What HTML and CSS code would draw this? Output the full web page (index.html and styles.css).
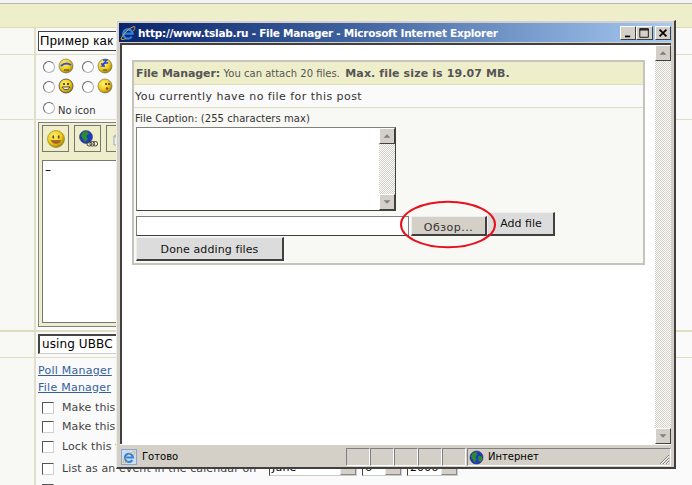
FILE: index.html
```html
<!DOCTYPE html>
<html lang="ru">
<head>
<meta charset="utf-8">
<title>File Manager</title>
<link rel="stylesheet" href="styles.css">
</head>
<body>
<svg class="defs" width="0" height="0">
  <defs>
    <radialGradient id="sm" cx="40%" cy="35%" r="70%"><stop offset="0" stop-color="#fff27a"/><stop offset=".6" stop-color="#f2c90e"/><stop offset="1" stop-color="#8a7410"/></radialGradient>
    <symbol id="ie" viewBox="0 0 16 16">
      <path d="M3.400 8.600h9.200A4.700 4.700 0 1 0 11.800 11.600" fill="none" stroke="#2f7fe0" stroke-width="2.300"/>
      <path d="M1 14C2.500 9.500 9 3 14 1.500c1.800-.2.500 3-.6 4.500M1 14c1 1.200 3.500.4 5-.6" fill="none" stroke="#e8b030" stroke-width=".9"/>
    </symbol>
    <symbol id="globe" viewBox="0 0 16 16">
      <circle cx="8" cy="8" r="7" fill="#1a3cc0" stroke="#333" stroke-width=".6"/>
      <path d="M4 3l4-1 1 3-2 2 1 3-2 3-2-3-2-3zM10 6l4 1 0 3-2 3-2-2z" fill="#2c8a30"/>
    </symbol>
  </defs>
</svg>

<div class="page">
  <div class="top-strip"></div>
  <div class="top-band"></div>

  <div class="row row-subject">
    <div class="side"></div>
    <div class="main"><div class="field field-subject">Пример как с</div></div>
  </div>

  <div class="row row-icons">
    <div class="side"></div>
    <div class="main icons">
      <div class="icon-grid">
        <span class="radio"></span><svg class="smiley" viewBox="0 0 16 16"><circle cx="8" cy="8" r="7" fill="url(#sm)" stroke="#666" stroke-width=".6"/><path d="M3 8c3-3 7-3 10-1" stroke="#3355dd" stroke-width="2" fill="none"/><path d="M6 12h5" stroke="#333"/></svg>
        <span class="radio"></span><svg class="smiley" viewBox="0 0 16 16"><circle cx="8" cy="8" r="7" fill="url(#sm)" stroke="#666" stroke-width=".6"/><path d="M6 2h4l-3 3h4M4 6h3l-2 2h3" stroke="#2244ee" stroke-width="1.300" fill="none"/><path d="M6 12h4" stroke="#333"/></svg>
        <span class="radio"></span><svg class="smiley" viewBox="0 0 16 16"><circle cx="8" cy="8" r="7" fill="url(#sm)" stroke="#444" stroke-width=".8"/><circle cx="6" cy="6" r="1" fill="#222"/><circle cx="10" cy="6" r="1" fill="#222"/><path d="M4 9c2 3.500 6 3.500 8 0z" fill="#fff" stroke="#222" stroke-width=".8"/></svg>
        <span class="radio"></span><svg class="smiley" viewBox="0 0 16 16"><circle cx="8" cy="8" r="7" fill="url(#sm)" stroke="#666" stroke-width=".6"/><circle cx="9" cy="6" r=".9" fill="#222"/><circle cx="12" cy="6" r=".9" fill="#222"/><circle cx="10" cy="10.500" r="1.200" fill="#a33"/></svg>
      </div>
      <div class="no-icon"><span class="radio"></span><span>No icon</span></div>
    </div>
  </div>

  <div class="row row-editor">
    <div class="side"></div>
    <div class="main">
      <div class="editor">
        <div class="tools">
          <span class="tool"><svg class="tool-img" viewBox="0 0 20 20"><circle cx="10" cy="10" r="8.500" fill="url(#sm)" stroke="#998a30" stroke-width=".7"/><ellipse cx="7.300" cy="8" rx="1" ry="1.800" fill="#553"/><ellipse cx="12.700" cy="8" rx="1" ry="1.800" fill="#553"/><path d="M5 11.500c2 4 8 4 10 0z" fill="#c8502a" stroke="#663" stroke-width=".6"/></svg></span>
          <span class="tool"><svg class="tool-img" viewBox="0 0 20 20"><circle cx="8" cy="8" r="6.500" fill="#1a3cc0" stroke="#333" stroke-width=".5"/><path d="M5 3l4-1 2 3-3 2 2 3-3 3-2-3-2-3z" fill="#2c8a30"/><rect x="9" y="12.500" width="4.500" height="4.500" rx="2" fill="none" stroke="#444"/><rect x="12" y="12.500" width="4.500" height="4.500" rx="2" fill="none" stroke="#444"/><rect x="15" y="12.500" width="4.500" height="4.500" rx="2" fill="none" stroke="#444"/></svg></span>
          <span class="tool"><svg class="tool-img" viewBox="0 0 20 20"><path d="M4 7l8-5 6 5v9H4z" fill="#eef0f4" stroke="#9ab"/><path d="M4 7l7 5 7-5" fill="#dde2f0" stroke="#9ab"/></svg></span>
        </div>
        <div class="editor-text">–</div>
      </div>
    </div>
  </div>

  <div class="row row-using">
    <div class="side"></div>
    <div class="main"><div class="field field-inset">using UBBC</div></div>
  </div>

  <div class="row row-options">
    <div class="side"></div>
    <div class="main options">
      <a class="opt-link" href="#">Poll Manager</a>
      <a class="opt-link opt-link-2" href="#">File Manager</a>
      <div class="opt opt-a"><span class="check"></span><span>Make this topic sticky</span></div>
      <div class="opt opt-b"><span class="check"></span><span>Make this topic an announcement</span></div>
      <div class="opt opt-c"><span class="check"></span><span>Lock this topic</span></div>
      <div class="opt opt-d">
        <span class="check"></span><span class="opt-cal">List as an event in the calendar on</span>
        <span class="sel sel-m">June<i></i></span><span class="sel sel-d">6<i></i></span><span class="sel sel-y">2006<i></i></span>
      </div>
      <div class="opt opt-e"><span class="check"></span><span>Add this topic to your watched topics</span></div>
    </div>
  </div>

  <section class="window">
    <header class="titlebar">
      <svg class="title-icon"><use href="#ie"/></svg>
      <span class="title-text">http://www.tslab.ru - File Manager - Microsoft Internet Explorer</span>
      <span class="ctl ctl-min"><svg viewBox="0 0 15 14"><path d="M4 10h6v2H4z"/></svg></span>
      <span class="ctl ctl-max"><svg viewBox="0 0 17 14"><path d="M3 2h10v10H3zM3 2.500h10M3 3.500h10" fill="none" stroke="#000"/></svg></span>
      <span class="ctl ctl-close"><svg viewBox="0 0 16 14"><path d="M4 3l8 8M12 3l-8 8" stroke="#000" stroke-width="2"/></svg></span>
    </header>
    <div class="client">
      <div class="doc">
        <div class="panel">
          <div class="panel-head"><b class="ph-a">File Manager:</b> <small>You can attach 20 files.</small> <b class="ph-b">Max. file size is 19.07 MB.</b></div>
          <div class="panel-note">You currently have no file for this post</div>
          <div class="panel-body">
            <div class="caption">File Caption: (255 characters max)</div>
            <div class="textarea">
              <div class="sb">
                <span class="sb-btn"><svg viewBox="0 0 16 16"><path d="M4 10l4-4 4 4z"/></svg></span>
                <span class="sb-track"></span>
                <span class="sb-btn"><svg viewBox="0 0 16 16"><path d="M4 6l4 4 4-4z"/></svg></span>
              </div>
            </div>
            <div class="file-row">
              <div class="file-input"></div>
              <button class="btn btn-browse" type="button">Обзор...</button>
              <button class="btn btn-add" type="button">Add file</button>
            </div>
            <button class="btn btn-done" type="button">Done adding files</button>
          </div>
        </div>
      </div>
      <div class="sb sb-page">
        <span class="sb-btn"><svg viewBox="0 0 16 16"><path d="M4 10l4-4 4 4z"/></svg></span>
        <span class="sb-track"></span>
        <span class="sb-btn"><svg viewBox="0 0 16 16"><path d="M4 6l4 4 4-4z"/></svg></span>
      </div>
    </div>
    <footer class="status">
      <div class="st-main"><span class="st-box"><svg class="st-icon"><use href="#ie"/></svg></span><span>Готово</span></div>
      <span class="st-cell"></span><span class="st-cell"></span><span class="st-cell"></span><span class="st-cell"></span><span class="st-cell"></span>
      <div class="st-zone"><svg class="st-icon st-globe"><use href="#globe"/></svg><span>Интернет</span>
        <svg class="grip" viewBox="0 0 12 12"><path d="M11 2L2 11M11 5l-6 6M11 8l-3 3" stroke="#808080" fill="none"/><path d="M11 3L3 11M11 6l-5 5M11 9l-2 2" stroke="#fff" fill="none"/></svg>
      </div>
    </footer>
    <svg class="circle" viewBox="0 0 98 49"><ellipse cx="49" cy="24.500" rx="47" ry="22.700" fill="none" stroke="#e8101c" stroke-width="2"/></svg>
  </section>
</div>
</body>
</html>
```

FILE: styles.css
```css
* { box-sizing: border-box; }
html, body { margin: 0; padding: 0; height: 100%; overflow: hidden; }
body { font-family: "DejaVu Sans", Verdana, sans-serif; font-size: 11px; color: #333; background: #fafafa; }
.defs { position: absolute; }

.page { position: relative; width: 692px; height: 485px; overflow: hidden; background: #fafafa; }
.top-strip { height: 4px; background: #f4f4f0; border-bottom: 1px solid #b8b8b0; }
.top-band { height: 24px; background: #efeeca; border-bottom: 1px solid #dcdcb8; }

.row { display: flex; border-bottom: 1px solid #dfdfc0; }
.row-subject { height: 27px; }
.row-icons { height: 65px; }
.row-editor { height: 212px; border-bottom-width: 2px; }
.row-using { height: 26px; }
.row-options { height: 128px; border-bottom: 0; }
.side { width: 36px; flex: none; background: #f8f8f4; border-right: 2px solid #e0e0c8; }
.main { flex: 1; padding-left: 2px; min-width: 0; }

.field { width: 500px; height: 20px; margin-top: 3px; padding-left: 2px; background: #fff; border: 1px solid #444; border-right-color: #ccc; font-size: 12px; line-height: 18px; color: #000; }
.field-subject { font: 13px/18px "Liberation Sans", Arial, sans-serif; letter-spacing: .35px; padding-left: 1px; }
.field-inset { margin-top: 2px; border-width: 2px 1px 1px 2px; border-color: #444 #ccc #ccc #444; line-height: 17px; letter-spacing: .1px; }

.icons { padding: 3px 0 0 7px; }
.icon-grid { display: grid; grid-template-columns: 15px 24px 15px 16px; row-gap: 4px; align-items: center; width: 70px; }
.smiley { width: 16px; height: 16px; display: block; }
.radio { width: 12px; height: 12px; display: block; border-radius: 50%; background: #fff; border: 1px solid #b0b0b0; border-top-color: #666; border-left-color: #666; }
.icon-grid .radio { margin-top: 2px; }
.no-icon { display: flex; gap: 2px; margin-top: 8px; font-size: 10px; color: #333; }
.no-icon span:last-child { line-height: 14px; height: 14px; margin-top: 2px; padding-left: 1px; }

.editor { width: 500px; height: 205px; margin-top: 2px; padding: 2px 0 3px 3px; background: #efeeca; border: 1px solid #808080; }
.tools { display: flex; gap: 5px; height: 35px; }
.tool { width: 27px; height: 27px; display: flex; align-items: center; justify-content: center; border: 1px solid #777; background: #efeeca; }
.tool-img { width: 20px; height: 20px; }
.editor-text { height: 163px; background: #fff; border: 1px solid #777; color: #000; font-size: 12px; line-height: 18px; padding-left: 2px; }

.options { padding-top: 6px; font-size: 11px; letter-spacing: .1px; }
.opt-link { display: block; width: max-content; color: #36609a; font-size: 11px; line-height: 14px; letter-spacing: .25px; text-decoration: underline; }
.opt-link-2 { margin-top: 3px; }
.opt { display: flex; align-items: center; height: 13px; margin-left: 4px; color: #444; white-space: nowrap; }
.opt-a { margin-top: 6px; }
.opt-b { margin-top: 6px; }
.opt-c { margin-top: 7px; }
.opt-d { margin-top: 9px; }
.opt-e { margin-top: 8px; }
.check { width: 12px; height: 12px; margin-right: 8px; flex: none; background: #fff; border: 1px solid #d0d0d0; border-top-color: #555; border-left-color: #555; }
.opt-cal { width: 207px; }
.sel { position: relative; height: 15px; margin-right: 5px; padding-left: 2px; background: #fff; border: 1px solid #ccc; border-top-color: #444; border-left-color: #444; line-height: 11px; color: #000; }
.sel i { position: absolute; right: 0; top: 0; width: 16px; height: 13px; background: #d4d0c8; border: 1px solid #888; border-top: 0; border-left-color: #eee; }
.sel-m { width: 88px; }
.sel-d { width: 40px; }
.sel-y { width: 51px; }

.window { position: absolute; left: 116px; top: 20px; width: 560px; height: 449px; display: flex; flex-direction: column; padding: 2px 3px 1px 3px; background: #d4d0c8; border: 1px solid #eeece6; border-right: 2px solid #404040; border-bottom: 2px solid #404040; }
.titlebar { display: flex; align-items: center; height: 19px; flex: none; margin: 0 -1px; padding: 0 1px; background: linear-gradient(90deg, #0a246a 0%, #3c5f9d 40%, #a6caf0 100%); }
.title-icon { width: 16px; height: 16px; flex: none; margin-right: 2px; }
.title-text { flex: 1; font: bold 10.5px "DejaVu Sans", Verdana, sans-serif; color: #fff; white-space: nowrap; letter-spacing: -.27px; }
.ctl { width: 16px; height: 14px; flex: none; background: #d4d0c8; border: 1px solid; border-color: #fff #404040 #404040 #fff; display: block; }
.ctl svg { display: block; width: 100%; height: 100%; }
.ctl-max { width: 17px; margin-right: 2px; }

.client { flex: 1; min-height: 0; display: flex; margin-top: 1px; border-top: 2px solid #404040; border-left: 2px solid #404040; background: #fff; }
.doc { flex: 1; padding: 15px 10px 0; min-width: 0; }
.panel { width: 513px; height: 205px; display: flex; flex-direction: column; border: 2px solid #c4c4bc; background: #f8f8f4; }
.panel-head { height: 23px; padding: 4px 2px 0; background: #efeeca; border-bottom: 1px solid #dcdcb8; color: #555; font-size: 11px; line-height: 16px; white-space: nowrap; }
.ph-a { letter-spacing: -.08px; }
.ph-b { letter-spacing: .12px; margin-left: 2px; }
.panel-head small { font-size: 10px; font-weight: normal; }
.panel-note { height: 23px; padding: 4px 1px 0; background: #fafafa; border-bottom: 1px solid #dfdfc0; color: #333; font-size: 11px; line-height: 16px; letter-spacing: .45px; }
.panel-body { flex: 1; padding: 2px 0 0 2px; }
.caption { height: 17px; margin-left: -1px; padding-top: 2px; font-size: 10px; line-height: 14px; color: #333; letter-spacing: .05px; }

.textarea { width: 260px; height: 84px; display: flex; justify-content: flex-end; background: #fff; border: 1px solid; border-color: #808080 #404040 #404040 #808080; }
.sb { width: 16px; flex: none; display: flex; flex-direction: column; }
.sb-btn { height: 16px; flex: none; display: block; background: #d4d0c8; border: 1px solid; border-color: #fff #404040 #404040 #fff; }
.sb-btn svg { display: block; width: 100%; height: 100%; fill: #808080; }
.sb-track { flex: 1; background: repeating-conic-gradient(#fff 0 25%, #d4d0c8 0 50%) 0 0 / 2px 2px; }

.file-row { display: flex; align-items: flex-end; height: 25px; }
.file-input { width: 273px; height: 20px; margin-right: 2px; background: #fff; border: 1px solid; border-color: #808080 #808080 #404040 #808080; }
.btn { display: block; padding: 0; font: 11px "DejaVu Sans", Verdana, sans-serif; color: #111; background: #dcdcdc; border: solid #404040; border-color: #eee #404040 #404040 #eee; border-width: 1px 2px 2px 1px; }
.btn-browse { width: 76px; height: 20px; padding-top: 3px; background: #d4d0c8; color: #333; letter-spacing: .5px; }
.btn-add { width: 68px; height: 24px; padding: 0 0 0 1px; }
.btn-done { width: 148px; height: 24px; margin-top: 1px; padding-top: 2px; letter-spacing: .1px; }

.status { height: 22px; flex: none; display: flex; padding-top: 3px; color: #000; font-size: 10px; line-height: 16px; background: #d4d0c8; border-top: 1px solid #fff; }
.st-cell, .st-zone { height: 18px; border: 1px solid; border-color: #808080 #fff #fff #808080; }
.st-main { width: 226px; height: 18px; display: flex; align-items: center; gap: 5px; padding-left: 1px; }
.st-box { width: 16px; height: 16px; flex: none; background: #cfdcf0; border: 1px solid #8aa4cc; display: block; }
.st-box .st-icon { display: block; width: 14px; height: 14px; }
.st-cell { width: 24px; flex: none; }
.st-zone { flex: 1; display: flex; align-items: center; gap: 4px; padding-left: 1px; position: relative; margin-left: 1px; }
.st-icon { width: 15px; height: 15px; flex: none; }
.grip { position: absolute; right: 0; bottom: 0; width: 12px; height: 12px; }
.circle { position: absolute; left: 282px; top: 179px; width: 98px; height: 49px; pointer-events: none; }
```
